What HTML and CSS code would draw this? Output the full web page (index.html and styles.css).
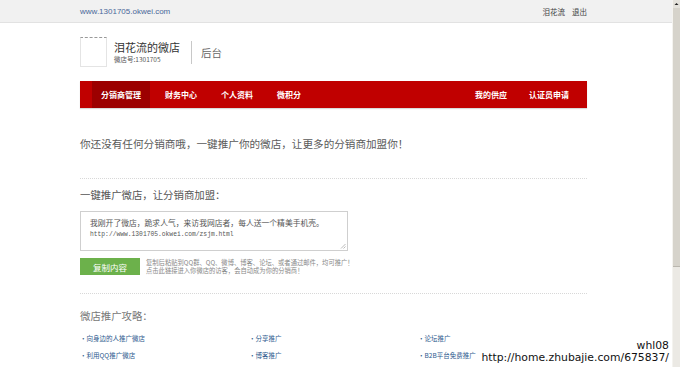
FILE: index.html
```html
<!DOCTYPE html>
<html lang="zh-CN">
<head>
    <meta charset="UTF-8">
    <title>泪花流的微店 - 后台</title>
    <link rel="stylesheet" href="styles.css">
</head>
<body>
    <div class="window">
        <div class="page">
            <div class="topbar">
                <div class="wrap topbar-inner">
                    <a class="site-url" href="#">www.1301705.okwei.com</a>
                    <div class="user-links">
                        <a href="#">泪花流</a>
                        <a href="#">退出</a>
                    </div>
                </div>
            </div>

            <div class="wrap header">
                <div class="logo"></div>
                <div class="shop">
                    <div class="shop-name">泪花流的微店</div>
                    <div class="shop-no">微店号:1301705</div>
                </div>
                <div class="divider"></div>
                <div class="backend">后台</div>
            </div>

            <div class="wrap nav">
                <div class="nav-left">
                    <a class="active" href="#">分销商管理</a>
                    <a href="#">财务中心</a>
                    <a href="#">个人资料</a>
                    <a href="#">微积分</a>
                </div>
                <div class="nav-right">
                    <a href="#">我的供应</a>
                    <a href="#">认证员申请</a>
                </div>
            </div>

            <div class="wrap content">
                <p class="notice">你还没有任何分销商哦，一键推广你的微店，让更多的分销商加盟你！</p>

                <div class="section">
                    <h3 class="section-title">一键推广微店，让分销商加盟：</h3>
                    <div class="share-box">
                        <div class="share-line">我刚开了微店，跪求人气，来访我网店者，每人送一个精美手机壳。</div>
                        <div class="share-url">http://www.1301705.okwei.com/zsjm.html</div>
                        <svg class="grip" width="6" height="6" viewBox="0 0 6 6">
                            <path d="M5.5 1 L1 5.5 M5.5 3.5 L3.5 5.5" stroke="#aaa" stroke-width="0.8"/>
                        </svg>
                    </div>
                    <div class="copy-row">
                        <button class="copy-btn">复制内容</button>
                        <div class="copy-tip">
                            <div>复制后粘贴到QQ群、QQ、微博、博客、论坛、或者通过邮件，均可推广！</div>
                            <div>点击此链接进入你微店的访客，会自动成为你的分销商！</div>
                        </div>
                    </div>
                </div>

                <div class="section guide">
                    <h3 class="guide-title">微店推广攻略：</h3>
                    <div class="guide-links">
                        <a href="#">·向身边的人推广微店</a>
                        <a href="#">·分享推广</a>
                        <a href="#">·论坛推广</a>
                        <a href="#">·利用QQ推广微店</a>
                        <a href="#">·博客推广</a>
                        <a href="#">·B2B平台免费推广</a>
                    </div>
                </div>
            </div>

            <div class="watermark">
                <div>whl08</div>
                <div>http://home.zhubajie.com/675837/</div>
            </div>
        </div>

        <div class="scrollbar">
            <div class="scroll-up">
                <svg width="7" height="8" viewBox="0 0 7 8"><path d="M1.5 5 L3.5 3 L5.5 5 Z" fill="#222"/></svg>
            </div>
            <div class="scroll-thumb"></div>
            <div class="scroll-track"></div>
        </div>
    </div>
</body>
</html>
```

FILE: styles.css
```css
body {
    margin: 0;
    font-family: "Noto Sans CJK SC", "Liberation Sans", sans-serif;
    color: #555;
    background: #fff;
}
a {
    text-decoration: none;
}
.window {
    display: flex;
    height: 367px;
    overflow: hidden;
}
.page {
    position: relative;
    flex: 1;
    overflow: hidden;
}
.wrap {
    width: 507px;
    margin-left: 80px;
}

/* top bar */
.topbar {
    height: 22px;
    background: #f1f1f1;
    border-bottom: 1px solid #e2e2e2;
}
.topbar-inner {
    display: flex;
    justify-content: space-between;
    align-items: center;
    height: 22px;
}
.site-url {
    font-family: "Liberation Sans", sans-serif;
    font-size: 8px;
    color: #4a6899;
}
.user-links {
    display: flex;
    gap: 7px;
    font-size: 7.5px;
}
.user-links a {
    color: #444;
}

/* header */
.header {
    display: flex;
    align-items: center;
    padding: 14px 0;
}
.logo {
    width: 25px;
    height: 28px;
    border: 1px solid #e4e4e4;
    border-top: 1px dashed #999;
}
.shop {
    margin-left: 7px;
}
.shop-name {
    font-size: 11px;
    line-height: 14px;
    color: #333;
}
.shop-no {
    font-size: 6.5px;
    line-height: 10px;
    color: #555;
}
.divider {
    width: 1px;
    height: 23px;
    background: #c8c8c8;
    margin-left: 11px;
}
.backend {
    margin-left: 9px;
    font-size: 10.5px;
    color: #666;
}

/* nav */
.nav {
    display: flex;
    justify-content: space-between;
    height: 27px;
    background: #c00000;
    box-shadow: 0 1px 1px rgba(0, 0, 0, 0.15);
}
.nav-left,
.nav-right {
    display: flex;
    gap: 6px;
}
.nav-left {
    padding-left: 12px;
}
.nav-right {
    gap: 4px;
    padding-right: 9px;
}
.nav a {
    padding: 0 9px;
    line-height: 27px;
    font-size: 8px;
    font-weight: bold;
    color: #fff;
}
.nav a.active {
    background: #9c0000;
}

/* content */
.notice {
    margin: 28px 0 0;
    padding-bottom: 26px;
    font-size: 10.6px;
    line-height: 16px;
    color: #5a5a5a;
    border-bottom: 1px dotted #d8d8d8;
}
.section-title,
.guide-title {
    margin: 0;
    font-weight: normal;
    font-size: 10.4px;
    line-height: 16px;
}
.section {
    padding-top: 8px;
    padding-bottom: 18px;
    border-bottom: 1px dotted #d8d8d8;
}
.section-title {
    color: #555;
}
.share-box {
    position: relative;
    width: 248px;
    height: 28px;
    margin-top: 8px;
    padding: 5px 9px;
    border: 1px solid #cfcfcf;
}
.share-line {
    font-size: 7.8px;
    line-height: 12px;
    color: #555;
}
.share-url {
    font-family: "Liberation Mono", monospace;
    font-size: 6.3px;
    line-height: 12px;
    color: #555;
}
.grip {
    position: absolute;
    right: 1px;
    bottom: 1px;
}
.copy-row {
    display: flex;
    align-items: center;
    margin-top: 7px;
}
.copy-btn {
    width: 60px;
    height: 17px;
    padding: 0;
    border: none;
    background: #6cb14b;
    color: #fff;
    font-family: inherit;
    font-size: 8.5px;
    cursor: pointer;
}
.copy-tip {
    margin-left: 6px;
    font-size: 6.3px;
    line-height: 8px;
    color: #888;
}

/* guide */
.guide {
    border-bottom: none;
    padding-top: 14px;
}
.guide-title {
    color: #777;
}
.guide-links {
    display: grid;
    grid-template-columns: 169px 169px 169px;
    margin-top: 6px;
}
.guide-links a {
    font-size: 6.5px;
    line-height: 17px;
    color: #2d5a8e;
}

/* overlay text */
.watermark {
    position: absolute;
    right: 3px;
    bottom: 3px;
    text-align: right;
    font-family: "DejaVu Sans", sans-serif;
    font-size: 10.8px;
    line-height: 12px;
    color: #111;
}

/* window scrollbar */
.scrollbar {
    display: flex;
    flex-direction: column;
    width: 7px;
    background: #ebe9e4;
    border-left: 1px solid #f4f3ef;
}
.scroll-up {
    height: 8px;
    background: #e4e2dc;
}
.scroll-up svg {
    display: block;
}
.scroll-thumb {
    height: 258px;
    background: #d6d3cb;
    border-bottom: 1px solid #b9b6ae;
}
.scroll-track {
    flex: 1;
}
```
